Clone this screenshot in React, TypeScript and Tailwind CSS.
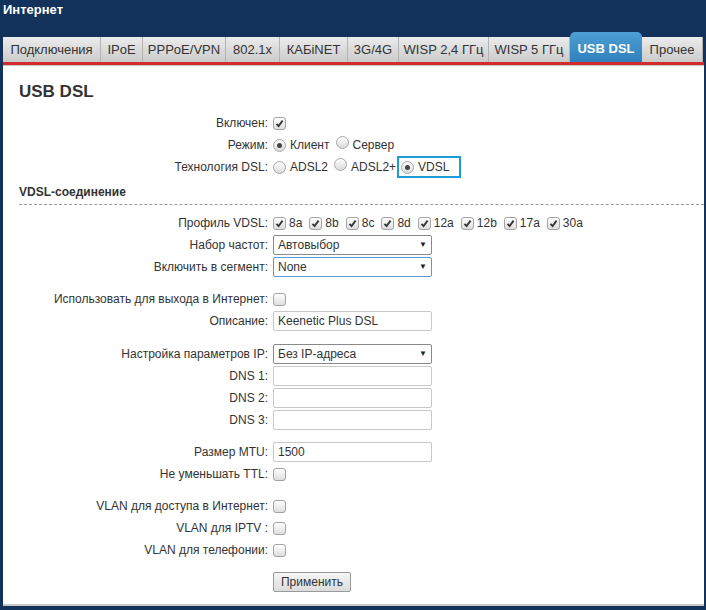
import React from "react";

const tabs: [string, number, boolean?][] = [
  ["Подключения", 98],
  ["IPoE", 42],
  ["PPPoE/VPN", 83],
  ["802.1x", 54],
  ["КАБiNET", 68],
  ["3G/4G", 51],
  ["WISP 2,4 ГГц", 90],
  ["WISP 5 ГГц", 81],
  ["USB DSL", 72, true],
  ["Прочее", 61],
];

function Check({ checked }: { checked?: boolean }) {
  return (
    <span className="inline-flex h-[13px] w-[13px] shrink-0 items-center justify-center rounded-[3px] border border-[#a3a3a3] bg-gradient-to-b from-white to-[#dedede]">
      {checked && (
        <svg width="9" height="9" viewBox="0 0 9 9">
          <path d="M1.5 4.8 L3.6 7 L7.6 1.6" fill="none" stroke="#333" strokeWidth="1.8" />
        </svg>
      )}
    </span>
  );
}

function Radio({ checked }: { checked?: boolean }) {
  return (
    <span className="inline-flex h-[13px] w-[13px] shrink-0 items-center justify-center rounded-full border border-[#a8a8a8] bg-gradient-to-b from-white to-[#dadada]">
      {checked && <span className="h-[5px] w-[5px] rounded-full bg-[#444]" />}
    </span>
  );
}

function Row({ label, children }: { label: string; children?: React.ReactNode }) {
  return (
    <div className="flex h-[22px] items-center">
      <div className="w-[254px] shrink-0 pr-[5px] text-right">{label}</div>
      <div className="flex items-center">{children}</div>
    </div>
  );
}

function Input({ value }: { value?: string }) {
  return (
    <div className="flex h-[20px] w-[159px] items-center rounded-[2px] border border-[#c8c8c8] bg-white px-[4px]">
      {value}
    </div>
  );
}

function Select({ value, focus }: { value: string; focus?: boolean }) {
  return (
    <div
      className={
        focus
          ? "flex h-[20px] w-[159px] items-center justify-between rounded-[2px] border border-[#5b9bd5] bg-white pl-[4px] pr-[4px]"
          : "flex h-[20px] w-[159px] items-center justify-between rounded-[2px] border border-[#8a8a8a] bg-white pl-[4px] pr-[4px]"
      }
    >
      <span>{value}</span>
      <span className="text-[8px] text-[#222]">▼</span>
    </div>
  );
}

export default function App() {
  return (
    <div
      className="h-[610px] w-[706px] overflow-hidden bg-[#12315b] text-[12px] text-[#333]"
      style={{ fontFamily: '"Liberation Sans", Arial, sans-serif' }}
    >
      <div className="h-[32px] pl-[3px] pt-[2px] text-[13px] font-bold leading-[15px] text-white">Интернет</div>
      <div className="ml-[3px] flex h-[30px] items-end">
        {tabs.map(([name, w, active]) =>
          active ? (
            <div
              key={name}
              style={{ width: w }}
              className="flex h-[30px] items-center justify-center rounded-t-[5px] bg-gradient-to-b from-[#4f9fd6] to-[#2f80bb] pt-[4px] text-[13px] font-bold text-white"
            >
              {name}
            </div>
          ) : (
            <div
              key={name}
              style={{ width: w }}
              className="flex h-[25px] items-center justify-center border-r border-[#b3b3b3] bg-gradient-to-b from-[#ececec] to-[#cbcbcb] text-[13px] text-[#333]"
            >
              {name}
            </div>
          )
        )}
      </div>
      <div className="ml-[3px] mr-[2px] h-[3px] bg-[#d42a2e]" />
      <div className="ml-[3px] mr-[2px] h-[541px] border-t border-[#c8c8c8] border-b-[2px] border-b-[#c9c9c9] bg-white pl-[16px] pt-[16px]">
        <div className="h-[20px] text-[17px] font-bold leading-[20px] text-[#333]">USB DSL</div>
        <div className="mt-[10px]">
          <Row label="Включен:">
            <Check checked />
          </Row>
          <Row label="Режим:">
            <Radio checked />
            <span className="ml-[4px]">Клиент</span>
            <span className="ml-[6px]">
              <Radio />
            </span>
            <span className="ml-[4px]">Сервер</span>
          </Row>
          <Row label="Технология DSL:">
            <Radio />
            <span className="ml-[4px]">ADSL2</span>
            <span className="ml-[6px]">
              <Radio />
            </span>
            <span className="ml-[4px]">ADSL2+</span>
            <span className="ml-[1px] flex h-[22px] items-center border-2 border-[#1c9bd8] pl-[2px] pr-[10px]">
              <Radio checked />
              <span className="ml-[4px]">VDSL</span>
            </span>
          </Row>
        </div>
        <div className="mt-[7px] border-b border-dashed border-[#9a9a9a] pb-[4px] font-bold leading-[15px]">
          VDSL-соединение
        </div>
        <div className="mt-[7px]">
          <Row label="Профиль VDSL:">
            {["8a", "8b", "8c", "8d", "12a", "12b", "17a", "30a"].map((p, i) => (
              <span key={p} className={i === 0 ? "flex items-center" : "ml-[7px] flex items-center"}>
                <Check checked />
                <span className="ml-[3px]">{p}</span>
              </span>
            ))}
          </Row>
          <Row label="Набор частот:">
            <Select value="Автовыбор" />
          </Row>
          <Row label="Включить в сегмент:">
            <Select value="None" focus />
          </Row>
        </div>
        <div className="mt-[10px]">
          <Row label="Использовать для выхода в Интернет:">
            <Check />
          </Row>
          <Row label="Описание:">
            <Input value="Keenetic Plus DSL" />
          </Row>
        </div>
        <div className="mt-[11px]">
          <Row label="Настройка параметров IP:">
            <Select value="Без IP-адреса" />
          </Row>
          <Row label="DNS 1:">
            <Input />
          </Row>
          <Row label="DNS 2:">
            <Input />
          </Row>
          <Row label="DNS 3:">
            <Input />
          </Row>
        </div>
        <div className="mt-[10px]">
          <Row label="Размер MTU:">
            <Input value="1500" />
          </Row>
          <Row label="Не уменьшать TTL:">
            <Check />
          </Row>
        </div>
        <div className="mt-[10px]">
          <Row label="VLAN для доступа в Интернет:">
            <Check />
          </Row>
          <Row label="VLAN для IPTV :">
            <Check />
          </Row>
          <Row label="VLAN для телефонии:">
            <Check />
          </Row>
        </div>
        <div className="mt-[11px] flex">
          <div className="w-[254px]" />
          <button className="h-[20px] w-[78px] rounded-[2px] border border-[#9a9a9a] bg-gradient-to-b from-[#f6f6f6] to-[#dcdcdc] text-[12px] text-[#333]">
            Применить
          </button>
        </div>
      </div>
    </div>
  );
}
